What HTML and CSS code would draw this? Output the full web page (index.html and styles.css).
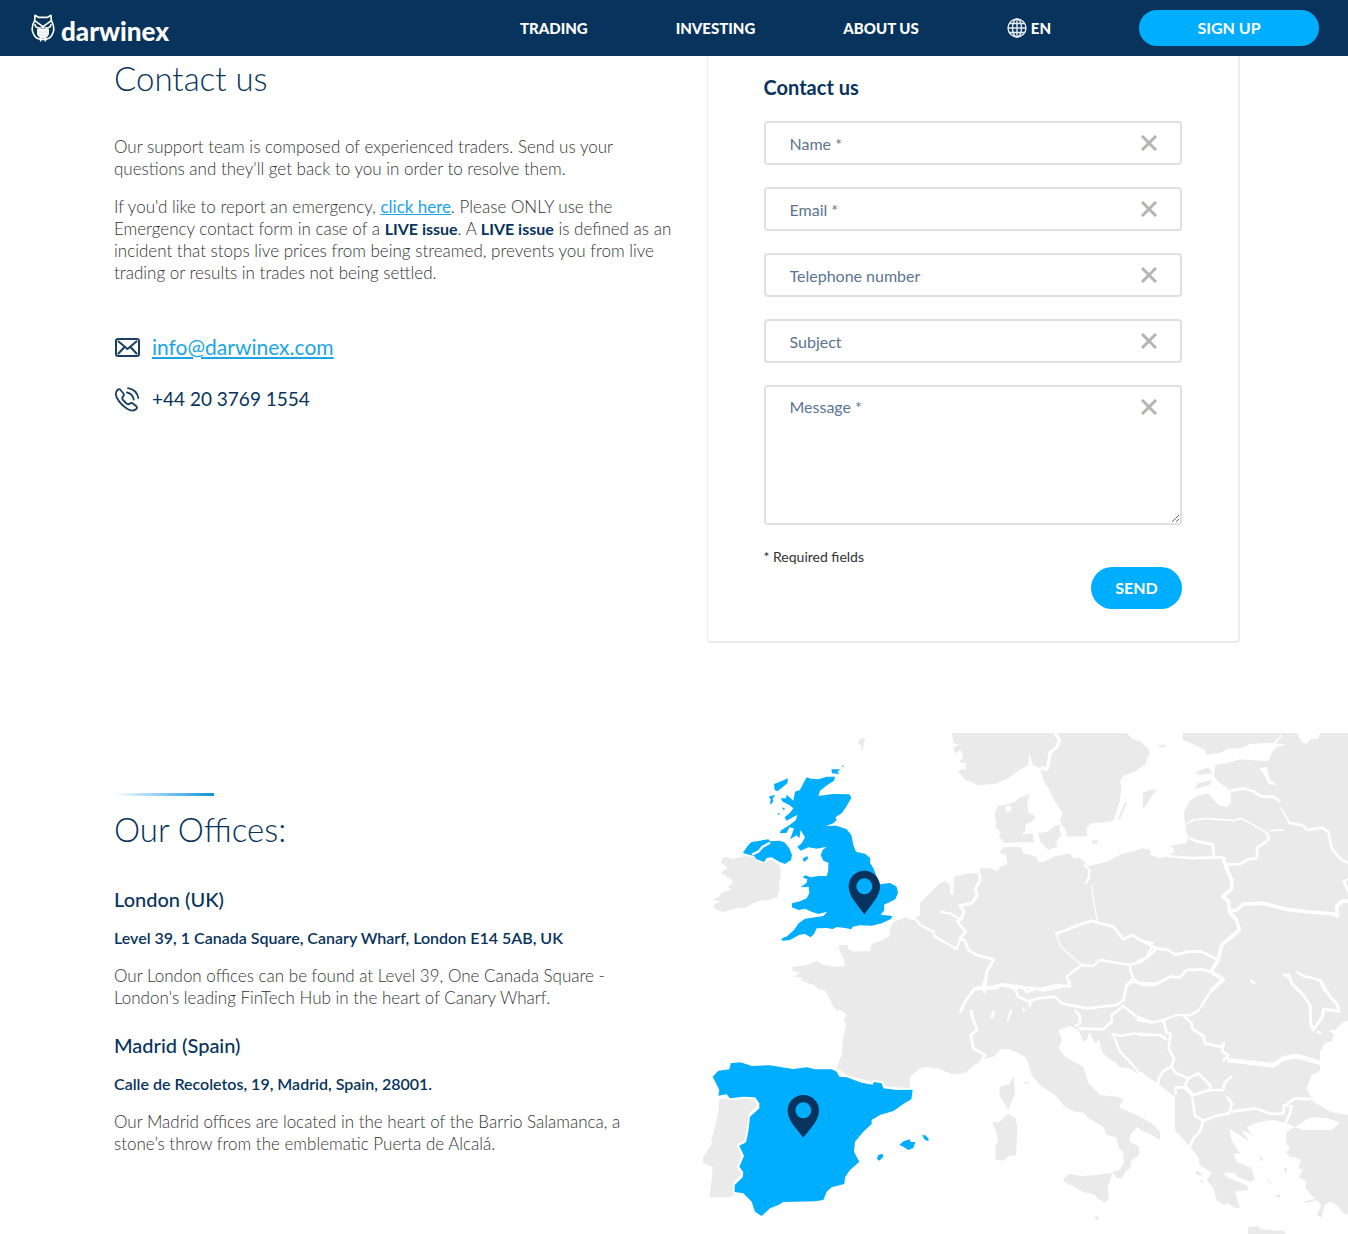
FILE: index.html
```html
<!DOCTYPE html>
<html lang="en">
<head>
<meta charset="utf-8">
<title>Contact us - Darwinex</title>
<link rel="stylesheet" href="styles.css">
</head>
<body>
<header class="topbar">
  <a class="logo" href="#">
    <svg class="logo-owl" viewBox="0 0 72 84" aria-hidden="true">
      <g fill="none" stroke="#fff" stroke-width="5" stroke-linejoin="round" stroke-linecap="round">
        <path d="M12 4 L22 10 H50 L60 4 L61 20 Q70 34 68 50 Q64 66 54 73 Q36 80 18 73 Q8 66 4 50 Q2 34 11 20 Z"/>
        <path d="M11 20 L36 38 L61 20"/>
        <path d="M12 32 Q14 44 30 42 M60 32 Q58 44 42 42"/>
        <path d="M29 74 V80 M43 74 V80"/>
      </g>
      <path d="M18 45 H54 V60 Q50 72 36 74 Q22 72 18 60Z" fill="#fff"/>
      <path d="M18 54 H54 M20 63 H52" stroke="#8aa3ba" stroke-width="1" fill="none"/>
      <path d="M30 36 H42 L36 47Z" fill="#fff"/>
    </svg>
    <span class="logo-name">darwinex</span>
  </a>
  <nav class="nav">
    <a href="#">TRADING</a>
    <a href="#">INVESTING</a>
    <a href="#">ABOUT US</a>
    <a class="lang" href="#">
      <svg class="globe" viewBox="0 0 20 20" aria-hidden="true"><g fill="none" stroke="#e6ecf2" stroke-width="1.4"><circle cx="10" cy="10" r="9"/><ellipse cx="10" cy="10" rx="4.500" ry="9"/><path d="M10 1V19M1 10H19M2.500 5.500H17.500M2.500 14.500H17.500"/></g></svg>
      EN</a>
  </nav>
  <a class="signup" href="#">SIGN UP</a>
</header>
<main>
  <section class="contact">
    <div class="intro">
      <h1 class="title">Contact us</h1>
      <p>Our support team is composed of experienced traders. Send us your<br>questions and they'll get back to you in order to resolve them.</p>
      <p>If you'd like to report an emergency, <a href="#">click here</a>. Please ONLY use the<br>Emergency contact form in case of a <strong>LIVE issue</strong>. A <strong>LIVE issue</strong> is defined as an<br>incident that stops live prices from being streamed, prevents you from live<br>trading or results in trades not being settled.</p>
      <ul class="channels">
        <li>
          <svg class="channel-icon" viewBox="0 0 26 26" fill="none" stroke="#1b3f63" stroke-width="2" stroke-linejoin="round" aria-hidden="true"><rect x="2" y="5" width="23" height="17" rx="2"/><path d="M4 7 L13.500 15 L23 7 M4 20 L10.500 13 M23 20 L16.500 13"/></svg>
          <a class="email" href="#">info@darwinex.com</a>
        </li>
        <li>
          <svg class="channel-icon" viewBox="0 0 26 26" fill="none" stroke="#1b3f63" stroke-width="1.800" stroke-linejoin="round" stroke-linecap="round" aria-hidden="true"><path d="M6 3.500 L9.500 7.500 Q10.500 9 9 10.500 Q7.500 12 9 14 L12.500 17.500 Q14.500 19 16 17.500 Q17.500 16.500 19 17.500 L22.500 20.500 Q23.500 22 22 23.200 Q18.500 26 13.500 23 Q6.500 18.500 3 12 Q0.500 7 3.500 4 Q5 2.600 6 3.500 Z"/><path d="M13 6.500 Q18.500 7.500 19.800 13.500 M14 2.200 Q22.500 3.500 24.300 12"/></svg>
          <span>+44 20 3769 1554</span>
        </li>
      </ul>
    </div>
    <form class="card">
      <h2>Contact us</h2>
      <div class="field"><input type="text" placeholder="Name *" aria-label="Name"><button type="button" class="clear" aria-label="Clear name"><svg viewBox="0 0 16 16"><path d="M1 1L15 15M15 1L1 15"/></svg></button></div>
      <div class="field"><input type="email" placeholder="Email *" aria-label="Email"><button type="button" class="clear" aria-label="Clear email"><svg viewBox="0 0 16 16"><path d="M1 1L15 15M15 1L1 15"/></svg></button></div>
      <div class="field"><input type="tel" placeholder="Telephone number" aria-label="Telephone number"><button type="button" class="clear" aria-label="Clear telephone number"><svg viewBox="0 0 16 16"><path d="M1 1L15 15M15 1L1 15"/></svg></button></div>
      <div class="field"><input type="text" placeholder="Subject" aria-label="Subject"><button type="button" class="clear" aria-label="Clear subject"><svg viewBox="0 0 16 16"><path d="M1 1L15 15M15 1L1 15"/></svg></button></div>
      <div class="field"><textarea placeholder="Message *" aria-label="Message"></textarea><button type="button" class="clear" aria-label="Clear message"><svg viewBox="0 0 16 16"><path d="M1 1L15 15M15 1L1 15"/></svg></button></div>
      <p class="required">* Required fields</p>
      <button type="submit" class="send">SEND</button>
    </form>
  </section>
  <section class="offices">
    <div class="office-list">
      <div class="accent"></div>
      <h2 class="title">Our Offices:</h2>
      <article class="office">
        <h3>London (UK)</h3>
        <p class="address">Level 39, 1 Canada Square, Canary Wharf, London E14 5AB, UK</p>
        <p>Our London offices can be found at Level 39, One Canada Square -<br>London's leading FinTech Hub in the heart of Canary Wharf.</p>
      </article>
      <article class="office">
        <h3>Madrid (Spain)</h3>
        <p class="address">Calle de Recoletos, 19, Madrid, Spain, 28001.</p>
        <p>Our Madrid offices are located in the heart of the Barrio Salamanca, a<br>stone’s throw from the emblematic Puerta de Alcalá.</p>
      </article>
    </div>
    <svg class="map" viewBox="0 0 1974 1503" role="img" aria-label="Map of Europe with the offices in London and Madrid">
      <g class="land">
        <!-- Ireland, north-west France -->
        <g transform="translate(0 -9)">
          <path d="M98 384L112 380L125 388L165 378L195 382L200 392L218 400L245 388L258 400L270 405L273 440L266 460L268 480L262 502L230 512L215 510L190 520L165 535L150 532L100 546L82 540L70 530L74 522L90 515L68 507L85 503L95 488L125 478L112 470L128 460L125 448L92 430L112 412L93 398Z"/>
          <path d="M306 712L350 705L382 692L400 705L440 710L465 708L460 685L450 665L446 645L475 645L474 658L490 664L540 664L545 642L575 632L600 618L598 604L610 575L650 562L662 570L700 550L720 530L750 485L765 455L780 465V790H410L395 765L355 755L335 752L336 743L312 740L330 728L308 722Z"/>
          <path d="M508 30L516 24L526 26L522 42L518 62L512 58L514 46L504 42Z"/>
        </g>
        <!-- Scandinavia, Denmark, Germany, Poland -->
        <g transform="translate(750 -9)">
          <path d="M36 9H560L575 25L600 35L630 60L612 75L615 100L590 122L550 138L540 155L545 170L540 210L528 250L520 272L480 278L455 280L440 292L442 318L380 320L378 300L365 285L360 272L368 248L345 215L325 175L310 150L300 115L278 105L268 68L265 105L248 115L225 130L200 148L165 162L110 166L98 156L75 150L55 125L62 118L76 120L78 100L56 96L70 84L62 60L45 70L40 52L58 44L40 40Z"/>
          <path d="M270 192L262 215L264 245L288 262L270 278L258 282L255 305L245 312L242 335L195 340L178 322L180 305L165 290L170 275L163 255L172 228L195 225L225 215L240 202Z"/>
          <path d="M245 315L278 310L282 338L240 335ZM295 310L322 305L340 290L362 283L358 300L365 315L350 330L350 350L325 360L300 335ZM608 190L632 178L628 210L612 235ZM556 212L560 218L540 270L534 268Z"/>
          <ellipse cx="464" cy="336" rx="9" ry="6"/>
          <path d="M0 460L18 452L26 490L40 495L42 440L75 432L118 428L122 415L150 415L172 424L180 410L202 402L198 375L178 368L190 352L245 350L248 370L290 380L292 395L310 397L340 380L390 370L400 385L420 384L444 408L500 395L545 372L600 358L632 360V790H-60V520Z"/>
        </g>
        <!-- Finland, the Baltics, Belarus, Ukraine -->
        <g transform="translate(1350 -9)">
          <path d="M0 355L25 358L30 375L60 385L82 378L104 366L100 354L88 348L140 340L145 320L137 300L132 245L150 212L170 198L205 190L218 205L235 225L262 232L274 215L270 180L240 160L222 140L225 105L260 100L300 88L385 94L395 68L410 50L440 45L405 38L330 42L300 55L265 56L240 68L200 76L195 60L150 38L128 30V9H630V790H0ZM165 126L205 112L218 130L180 136ZM162 178L175 160L216 150L208 166ZM10 188L52 176L28 208L8 238ZM52 44L80 44L70 54ZM0 30L30 70L14 105L0 115Z"/>
        </g>
        <!-- South-west France and Portugal -->
        <g transform="translate(0 741)">
          <path d="M330 0L350 8L372 14L384 26L408 32L420 60L430 80L440 92L450 90L470 102L462 120L468 135L458 180L455 225L440 264L475 288L548 305L575 305L590 320L660 325L660 290L690 265L710 260L730 265L780 268V-20Z"/>
          <path d="M88 358L115 354L122 358L190 357L202 375L178 400L172 430L166 482L142 492L156 530L142 560L155 582L132 605L128 636L140 642L118 652L58 652L65 600L68 560L40 550L38 535L50 515L66 490L64 480L78 430L85 390Z"/>
        </g>
        <!-- Alps, Italy, Croatia -->
        <g transform="translate(750 741)">
          <path d="M0 268L35 282L75 280L95 262L125 240L165 228L180 208L210 208L255 230L265 250L275 285L300 315L345 345L375 380L400 394L430 398L445 415L490 440L500 465L528 472L537 505L548 515L552 545L540 570L518 575L530 594L545 595L560 570L570 565L575 540L598 525L597 500L570 485L570 465L590 442L632 454V428L600 410L538 382L550 358L530 350L480 345L445 310L430 260L375 230L356 205L366 180L356 150L390 138L415 150L430 185L440 180L448 155L465 190L478 180L485 215L505 235L530 250L540 262L570 265L590 280L632 300V-20H-40Z"/>
          <path d="M220 288L225 340L205 390L178 345L180 320L208 312ZM205 402L228 415L232 445L228 526L206 528L190 542L166 540L166 495L174 488L170 460L157 425L175 428ZM370 598L385 582L425 588L460 586L518 578L502 625L508 655L495 668L470 655L465 645L420 632L400 618L372 605Z"/>
          <ellipse cx="260" cy="308" rx="8" ry="3"/><ellipse cx="470" cy="714" rx="6" ry="5"/>
        </g>
        <!-- The Balkans, Greece, Turkey -->
        <g transform="translate(1350 741)">
          <path d="M0 -20H630V118L605 130L585 150L566 150L582 165L575 184L555 190L540 215V272L515 285L500 325L520 365L570 395L630 406V706L610 700L590 675L570 665L548 680L520 650L495 625L500 605L475 590L490 570L475 565L482 540L438 520L450 500L438 490L440 455L465 440L438 430L402 420L370 424L352 428L320 440L330 456L350 470L305 450L328 485L290 460L268 446L275 480L300 520L280 522L290 545L335 565L345 600L330 606L265 580L252 582L262 592L320 616L326 630L300 632L285 635L300 685L280 682L262 668L255 676L230 662L220 625L200 600L215 578L180 556L175 532L150 500L105 450V350L65 320L0 275ZM0 412L38 432L60 455V480L30 462L0 450ZM324 742L355 738L360 748L430 752L440 765H324ZM165 572L180 575L185 588L170 585ZM176 596L192 606L184 608ZM430 562L442 566L438 582ZM402 650L420 642L420 652ZM376 592L400 612L390 610ZM445 520L468 515L465 532L448 530ZM355 528L370 535L365 545ZM530 705L548 665L556 668L545 712ZM490 665L540 652L544 658L500 668Z"/>
        </g>
      </g>
      <g class="borders">
        <g transform="translate(750 -9)">
          <path d="M345 8L358 30L352 50L330 68L325 105L320 118L302 112" stroke-width="10"/>
          <path d="M118 428L120 450L105 480L112 495L95 520L60 527L72 545L65 565L52 575L78 605L60 625L75 632L85 660L110 675L162 688L140 725L133 790" stroke-width="9"/>
          <path d="M0 545L30 550L60 568M-90 563L-70 570L-60 585L-20 605L-15 620L20 640L50 657L62 625" stroke-width="7"/>
          <path d="M432 404L448 420L446 445L436 462" stroke-width="7"/>
          <path d="M455 465L462 520L472 575M350 615L362 650L385 670L425 705" stroke-width="4"/>
          <path d="M345 612L380 600L415 585L455 572L480 580L520 590L550 628L575 615L605 632L640 640" stroke-width="8"/>
          <path d="M640 645L620 680L605 695L570 705L540 700L480 690L460 708L425 705L380 740L390 770L350 765L300 777L240 770L185 762L170 775L100 778M570 705L572 725L580 745L555 770M580 745L600 762L640 765" stroke-width="7"/>
          <circle cx="205" cy="236" r="9" class="water"/>
          <path d="M180 346L250 350" stroke-width="5"/>
        </g>
        <g transform="translate(1350 -9)">
          <path d="M272 182L310 175L340 184L365 200L400 200L420 214M444 278L490 287L500 300L545 293L565 305L575 355L600 385L630 402" stroke-width="8"/>
          <path d="M422 232L446 275M140 282L160 270L200 265L280 272L302 265L350 290L380 308M388 302L430 300" stroke-width="5"/>
          <path d="M380 308L388 325L372 340L352 352L350 385L325 388L300 402L258 404M148 325L175 335L218 343L222 380M80 378L150 384L250 382" stroke-width="8"/>
          <path d="M250 382L258 410L275 450L275 475L248 500L265 512L268 545L290 570L298 600L245 645L235 690L212 725L250 748L210 785M270 542L290 540L310 522L370 520L440 538L510 546L580 552L592 558L590 530L605 514L630 512" stroke-width="11"/>
          <path d="M-10 625L50 655L85 660L105 674L145 665L185 665L235 690M50 655L25 680L-10 695M0 765L45 765L90 740L120 742L140 720L185 718L212 725M610 450L625 485M615 450H630" stroke-width="8"/>
          <path d="M428 732L445 740L455 758L480 785M470 725L490 738L510 742L540 752L555 785M330 752L345 760" stroke-width="7"/>
          <path d="M470 8L485 35L498 42L512 28L535 26L540 8ZM358 115L380 112L390 148L412 165L385 162L376 140Z" class="water"/>
          <path d="M400 42L425 16" stroke-width="5"/>
        </g>
        <g transform="translate(750 741)">
          <path d="M135 0L130 22L105 25L78 60L60 98" stroke-width="9"/>
          <path d="M105 28L185 15L225 25L235 50L270 65V80M230 22L250 22L260 36L290 25L310 32L390 15L388 0M270 62L300 54L345 50L365 70L440 85L530 75L550 62L560 15L580 5L640 15M545 75L590 110L640 128M545 82L515 105L515 125L490 148L415 145" stroke-width="8"/>
          <path d="M92 88L100 120L112 150L92 165L100 205L135 225L125 242M405 90L420 108V130L405 138" stroke-width="8"/>
          <path d="M515 162L545 168L580 160L640 165M520 165L540 215L575 250L608 295" stroke-width="7"/>
          <path d="M150 110L160 90L166 96L158 118ZM200 122L210 90L218 88L205 124ZM248 80L258 92L250 98Z" class="water"/>
        </g>
        <g transform="translate(1350 741)">
          <path d="M-10 120L35 128L70 120L110 105L150 106L175 92L205 45L225 20L250 0" stroke-width="7"/>
          <path d="M0 12L50 10L75 0M-5 165H60L80 178M70 120L80 158L92 162L86 205L102 235L95 258L68 275L55 300L55 320M132 108L155 130L158 148L190 168L195 190L240 200L252 190L246 215L265 225L248 245M95 262L108 280L145 295L175 280L200 305L212 318L208 330L160 345M0 278L55 318" stroke-width="8"/>
          <path d="M262 240L400 256L430 235L470 228L545 250" stroke-width="14"/>
          <path d="M445 -20L455 10L490 45L510 75L512 130L520 150L548 110L550 88L598 94L590 70L570 50L540 0" stroke-width="9"/>
          <path d="M208 330L250 330L252 310L275 288M145 295L135 315L155 340L160 375L165 408L190 422L235 406L268 400L275 370L260 350M105 345L108 322L130 322L158 345M190 422L180 455L160 475L150 500M275 395L345 385L395 402L430 400L432 375L455 378L450 400L436 430M440 372L465 355L515 358" stroke-width="8"/>
          <path d="M465 442L500 418L520 412L560 414L600 428L575 450L490 450ZM250 578L285 578L290 592L262 590Z" class="water"/>
          <path d="M330 0L345 10M530 155L545 158" stroke-width="6"/>
        </g>
      </g>
      <g class="active">
        <g transform="translate(0 -9)">
          <path d="M350 142L362 146L385 148L410 140L435 140L432 152L412 165L390 182L385 198L400 196L430 192L478 193L484 203L470 228L455 250L436 262L440 270L430 280L408 288L440 287L470 298L484 315L490 345L498 365L525 371L541 385L540 398L550 415L560 440L570 463L600 459L620 470L624 488L616 508L600 516L582 524L583 540L572 554L606 558L604 566L575 580L545 587L510 586L488 590L484 598L470 595L440 591L428 597L410 594L380 595L372 612L362 622L345 612L328 614L300 630L276 632L274 626L292 618L312 600L326 580L345 566L375 562L400 558L412 545L385 552L365 545L345 536L325 540L306 532V520L330 514L350 505L358 490L356 470L332 472L350 458L352 448L338 442L345 436L362 442L385 438L410 438L415 420V398L400 392L392 375L398 360L410 350L380 356L355 352L332 362L322 350L335 340L345 322L332 300L328 325L320 316L300 328L306 312L312 295L298 292L290 308L270 310L272 302L300 284L318 270L322 255L308 262L290 272L284 262L300 248L310 235L298 225L278 215L272 205L288 205L290 194L310 212L315 185L330 180L340 160Z"/>
          <path d="M160 366L175 345L185 336L235 328L240 334L270 332L285 338L298 355L306 375L303 390L285 402L265 394L245 382L230 384L222 396L200 388L192 378L160 370Z"/>
          <path d="M252 162L270 155L294 145L292 160L272 176L262 184L254 180ZM236 200L256 194L248 206L250 215L240 224L242 208ZM338 386L352 378L354 386L342 396ZM424 118L450 118L442 126L448 132L426 130ZM276 232L286 236L280 240ZM262 248L270 252L266 256ZM456 106L462 108L458 112Z"/>
          <path d="M186 374L205 365L218 350L240 338" class="lough"/>
        </g>
        <g transform="translate(0 741)">
          <path class="spain" d="M68 290L85 272L118 268L122 250L150 247L168 252L185 258L240 256L290 264L310 267L350 262L375 268L425 268L440 275L448 290L470 292L515 308L548 314L552 306L575 310L580 325L620 330L668 329L664 358L640 372L610 393L570 405L545 420L545 432L520 455L495 485L492 515L508 545L480 570L465 592L463 612L425 622L410 635L400 660L375 664L280 666L265 675L240 685L215 708L195 695L185 665L160 640L134 636V615L158 592L160 577L148 560L162 528L148 497L168 487L175 455L180 410L208 385L208 370L195 352L160 350L120 355L110 343L85 347L88 330L78 310Z"/>
          <path d="M628 495L640 484L660 478L662 486L676 486L670 504L655 510L640 500ZM696 466L706 466L716 476L715 483L705 480ZM560 536L566 524L578 522L580 530L568 542Z"/>
        </g>
      </g>
      <g class="pins">
        <path d="M523 413C497 413 476 434 476 460C476 490 500 512 523 544C546 512 570 490 570 460C570 434 549 413 523 413ZM523 436A24 24 0 1 1 523 484A24 24 0 1 1 523 436Z"/>
        <path d="M340 1086C314 1086 293 1106 293 1132C293 1162 317 1184 340 1214C363 1184 387 1162 387 1132C387 1106 366 1086 340 1086ZM340 1108A24 24 0 1 1 340 1156A24 24 0 1 1 340 1108Z"/>
      </g>
    </svg>
  </section>
</main>
</body>
</html>
```
FILE: styles.css
```css
* {
  box-sizing: border-box;
}

body {
  margin: 0;
  background: #fff;
  color: #333;
  font: 300 17px/22px Lato, "Open Sans", sans-serif;
}

a {
  color: #1ba5e8;
}

p {
  margin: 0 0 16px;
}

strong {
  color: #07335c;
  font-size: 16px;
  font-weight: 700;
}

p a {
  font-weight: 400;
}

.topbar {
  display: flex;
  align-items: center;
  height: 56px;
  padding: 0 29px 0 31px;
  background: #07335c;
}

.topbar a {
  color: #fff;
  font-size: 15px;
  font-weight: 900;
  text-decoration: none;
}

.logo {
  display: flex;
  align-items: center;
  gap: 6px;
}

.logo-owl {
  width: 24px;
  height: 28px;
}

.logo-name {
  padding-top: 6px;
  font-size: 26px;
}

.nav {
  display: flex;
  gap: 88px;
  margin-left: auto;
}

.lang {
  display: flex;
  align-items: center;
  gap: 4px;
}

.globe {
  width: 20px;
  height: 20px;
}

.topbar .signup {
  width: 180px;
  margin-left: 88px;
  border-radius: 18px;
  background: #00aeff;
  font-size: 16px;
  font-weight: 700;
  line-height: 36px;
  text-align: center;
}

.contact {
  display: grid;
  grid-template-columns: minmax(0, 560fr) minmax(0, 533fr);
  gap: 32px;
  padding: 0 108px 0 114px;
}

.title {
  margin: 0;
  color: #07335c;
  font-size: 33px;
  font-weight: 300;
  line-height: 40px;
}

.intro {
  padding-top: 2px;
}

.intro .title {
  margin-bottom: 38px;
}

.channels {
  display: grid;
  gap: 24px;
  margin: 0;
  padding: 33px 0 0;
  list-style: none;
  color: #07335c;
  font-size: 19px;
  font-weight: 400;
  line-height: 28px;
}

.channels li {
  display: flex;
  align-items: center;
  gap: 12px;
}

.email {
  font-size: 21px;
}

.channel-icon {
  width: 26px;
  height: 26px;
}

.card {
  display: flex;
  flex-direction: column;
  padding: 20px 56px 32px;
  border: solid #ebebeb;
  border-width: 0 2px 2px 1px;
  border-radius: 0 0 4px 4px;
}

.card h2 {
  margin: 0 0 23px;
  color: #07335c;
  font-size: 20px;
  font-weight: 700;
  line-height: 22px;
}

.field {
  position: relative;
  display: flex;
  margin-bottom: 22px;
}

.field input,
.field textarea {
  width: 100%;
  height: 44px;
  padding: 0 60px 0 24px;
  border: 2px solid #e0e0e0;
  border-radius: 4px;
  background: #fff;
  color: #07335c;
  font: 400 16px/22px Lato, "Open Sans", sans-serif;
}

.field textarea {
  height: 140px;
  padding-top: 9px;
  resize: vertical;
}

.field ::placeholder {
  color: #5b7590;
  opacity: 1;
}

.clear {
  position: absolute;
  top: 14px;
  right: 25px;
  width: 16px;
  height: 16px;
  padding: 0;
  border: 0;
  background: none;
}

.clear svg {
  display: block;
  fill: none;
  stroke: #b4b4b0;
  stroke-width: 3;
}

.required {
  margin: 0;
  font-size: 14px;
  font-weight: 400;
  line-height: 20px;
}

.send {
  align-self: flex-end;
  width: 91px;
  height: 42px;
  border: 0;
  border-radius: 21px;
  background: #00aeff;
  color: #fff;
  font: inherit;
  font-size: 16px;
  font-weight: 700;
}

.offices {
  display: grid;
  grid-template-columns: minmax(0, 690fr) minmax(0, 658fr);
  margin-top: 90px;
}

.office-list {
  padding: 60px 32px 0 114px;
}

.accent {
  width: 100px;
  height: 3px;
  margin-bottom: 13px;
  background: linear-gradient(90deg, #fff, #4aaee8 75%, #0a94d0);
}

.office-list .title {
  margin-bottom: 38px;
}

.office {
  margin-bottom: 24px;
}

.office h3 {
  margin: 0 0 16px;
  color: #07335c;
  font-size: 20px;
  font-weight: 500;
  line-height: 24px;
}

.office .address {
  color: #07335c;
  font-size: 16px;
  font-weight: 600;
}

.map {
  display: block;
  width: 100%;
}

.land {
  fill: #eaeaea;
}

.borders {
  fill: none;
  stroke: #fff;
  stroke-linejoin: round;
}

.borders .water {
  fill: #fff;
  stroke: none;
}

.active {
  fill: #00aeff;
}

.active .spain {
  stroke: #fff;
  stroke-width: 12;
  paint-order: stroke;
}

.active .lough {
  fill: none;
  stroke: #fff;
  stroke-width: 7;
}

.pins {
  fill: #07335c;
  fill-rule: evenodd;
}
```
